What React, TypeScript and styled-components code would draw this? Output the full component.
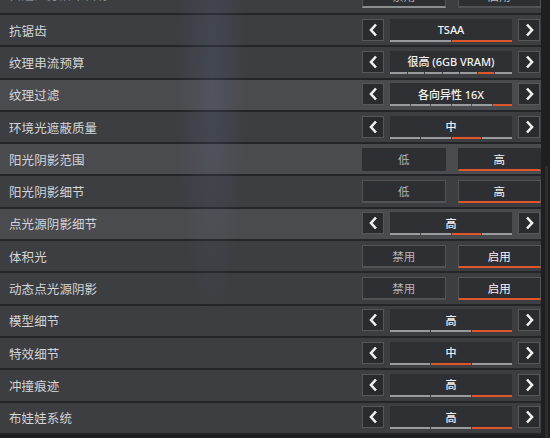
import React from "react";
import styled, { createGlobalStyle } from "styled-components";

const GlobalStyle = createGlobalStyle`
  html, body {
    margin: 0;
    padding: 0;
    background: #1c1d20;
  }
  body {
    font-family: "Noto Sans", "Noto Sans CJK SC", sans-serif;
  }
`;

const Screen = styled.div`
  position: relative;
  width: 550px;
  height: 438px;
  overflow: hidden;
  display: flex;
  background: #1c1d20;
`;

const List = styled.div`
  width: 541px;
  display: flex;
  flex-direction: column;
  margin-top: -17.3px;
`;

const Glow = styled.div`
  position: absolute;
  inset: 0;
  pointer-events: none;
  background: radial-gradient(
    ellipse 34px 230px at 212px 90px,
    rgba(120, 140, 185, 0.13),
    rgba(120, 140, 185, 0) 100%
  );
`;

const Track = styled.div`
  flex: 1;
  display: flex;
  justify-content: flex-end;
  padding-top: 166px;
  background: #1e1f22;
`;

const Thumb = styled.div`
  width: 3px;
  height: 272px;
  margin-right: 2px;
  background: #2c2d31;
`;

const Row = styled.div<{ $hi?: boolean; $cut?: boolean }>`
  box-sizing: border-box;
  height: 32.3px;
  flex: none;
  display: flex;
  align-items: ${(p) => (p.$cut ? "flex-start" : "center")};
  justify-content: space-between;
  padding: ${(p) => (p.$cut ? "2px 0 0 9px" : "0 0 0 9px")};
  background: ${(p) => (p.$hi ? "#4a4b4f" : "#3c3e42")};
  border-bottom: 2px solid #242528;
`;

const Label = styled.span<{ $cut?: boolean }>`
  font-family: "Noto Sans CJK SC", sans-serif;
  font-size: 12.5px;
  color: ${(p) => (p.$cut ? "#8a8c90" : "#d4d5d7")};
  letter-spacing: 0.1px;
`;

const Selector = styled.div`
  display: flex;
  align-items: flex-start;
  width: 178px;
  margin-right: 1px;
`;

const Arrow = styled.div`
  box-sizing: border-box;
  width: 22px;
  height: 22px;
  display: flex;
  align-items: center;
  justify-content: center;
  background: #2a2b2e;
  border: 1px solid #55575b;
`;

const ValueBox = styled.div`
  width: 122px;
  margin: 0 6px 0 6px;
  display: flex;
  flex-direction: column;
`;

const ValueText = styled.div`
  height: 21px;
  display: flex;
  align-items: center;
  justify-content: center;
  background: #2f3034;
  color: #f2f2f2;
  font-family: "Noto Sans", "Noto Sans CJK SC", sans-serif;
  font-size: 11px;
  font-weight: 500;
`;

const Bars = styled.div`
  display: flex;
  gap: 1px;
  height: 2px;
`;

const Bar = styled.div<{ $on?: boolean }>`
  flex: 1;
  background: ${(p) => (p.$on ? "#e0552b" : "#9a9b9d")};
`;

const Toggle = styled.div`
  display: flex;
  gap: 12px;
  width: 179px;
`;

const lineColor = (on?: boolean, flat?: boolean, muted?: boolean) =>
  on ? (muted ? "#8c8e92" : "#e0552b") : flat ? "transparent" : "#515357";

const Option = styled.div<{ $on?: boolean; $flat?: boolean; $muted?: boolean }>`
  box-sizing: border-box;
  flex: 1;
  height: 23px;
  display: flex;
  align-items: center;
  justify-content: center;
  font-family: "Noto Sans CJK SC", sans-serif;
  font-size: 11.5px;
  color: ${(p) => (p.$on && !p.$muted ? "#f4f4f4" : "#b4b5b7")};
  background: #2e2f33;
  border: 1px solid ${(p) => (p.$flat ? "transparent" : "#515357")};
  border-bottom: 2px solid ${(p) => lineColor(p.$on, p.$flat, p.$muted)};
`;

const Chevron = ({ dir }: { dir: "l" | "r" }) => (
  <svg width="9" height="14" viewBox="0 0 9 14">
    <polyline
      points={dir === "l" ? "7,1.5 2,7 7,12.5" : "2,1.5 7,7 2,12.5"}
      fill="none"
      stroke="#f0f0f0"
      strokeWidth="2.6"
      strokeLinejoin="miter"
    />
  </svg>
);

type Item =
  | { label: string; kind: "sel"; value: string; count: number; active: number; hi?: boolean; cut?: boolean }
  | { label: string; kind: "tog"; options: [string, string]; active: number; hi?: boolean; cut?: boolean };

const items: Item[] = [
  { label: "自适应分辨率目标", kind: "tog", options: ["禁用", "启用"], active: 0, cut: true },
  { label: "抗锯齿", kind: "sel", value: "TSAA", count: 2, active: 1 },
  { label: "纹理串流预算", kind: "sel", value: "很高 (6GB VRAM)", count: 7, active: 5 },
  { label: "纹理过滤", kind: "sel", value: "各向异性 16X", count: 6, active: 5, hi: true },
  { label: "环境光遮蔽质量", kind: "sel", value: "中", count: 4, active: 2 },
  { label: "阳光阴影范围", kind: "tog", options: ["低", "高"], active: 1, hi: true },
  { label: "阳光阴影细节", kind: "tog", options: ["低", "高"], active: 1 },
  { label: "点光源阴影细节", kind: "sel", value: "高", count: 4, active: 2, hi: true },
  { label: "体积光", kind: "tog", options: ["禁用", "启用"], active: 1 },
  { label: "动态点光源阴影", kind: "tog", options: ["禁用", "启用"], active: 1 },
  { label: "模型细节", kind: "sel", value: "高", count: 3, active: 2 },
  { label: "特效细节", kind: "sel", value: "中", count: 3, active: 1 },
  { label: "冲撞痕迹", kind: "sel", value: "高", count: 3, active: 2 },
  { label: "布娃娃系统", kind: "sel", value: "高", count: 3, active: 2 },
];

export default function App() {
  return (
    <>
      <GlobalStyle />
      <Screen>
        <List>
          {items.map((it, i) => (
            <Row key={i} $hi={it.hi} $cut={it.cut}>
              <Label $cut={it.cut}>{it.label}</Label>
              {it.kind === "sel" ? (
                <Selector>
                  <Arrow>
                    <Chevron dir="l" />
                  </Arrow>
                  <ValueBox>
                    <ValueText>{it.value}</ValueText>
                    <Bars>
                      {Array.from({ length: it.count }).map((_, j) => (
                        <Bar key={j} $on={j === it.active} />
                      ))}
                    </Bars>
                  </ValueBox>
                  <Arrow>
                    <Chevron dir="r" />
                  </Arrow>
                </Selector>
              ) : (
                <Toggle>
                  {it.options.map((o, j) => (
                    <Option
                      key={j}
                      $on={j === it.active}
                      $flat={it.hi}
                      $muted={it.cut}
                    >
                      {o}
                    </Option>
                  ))}
                </Toggle>
              )}
            </Row>
          ))}
        </List>
        <Track>
          <Thumb />
        </Track>
        <Glow />
      </Screen>
    </>
  );
}
